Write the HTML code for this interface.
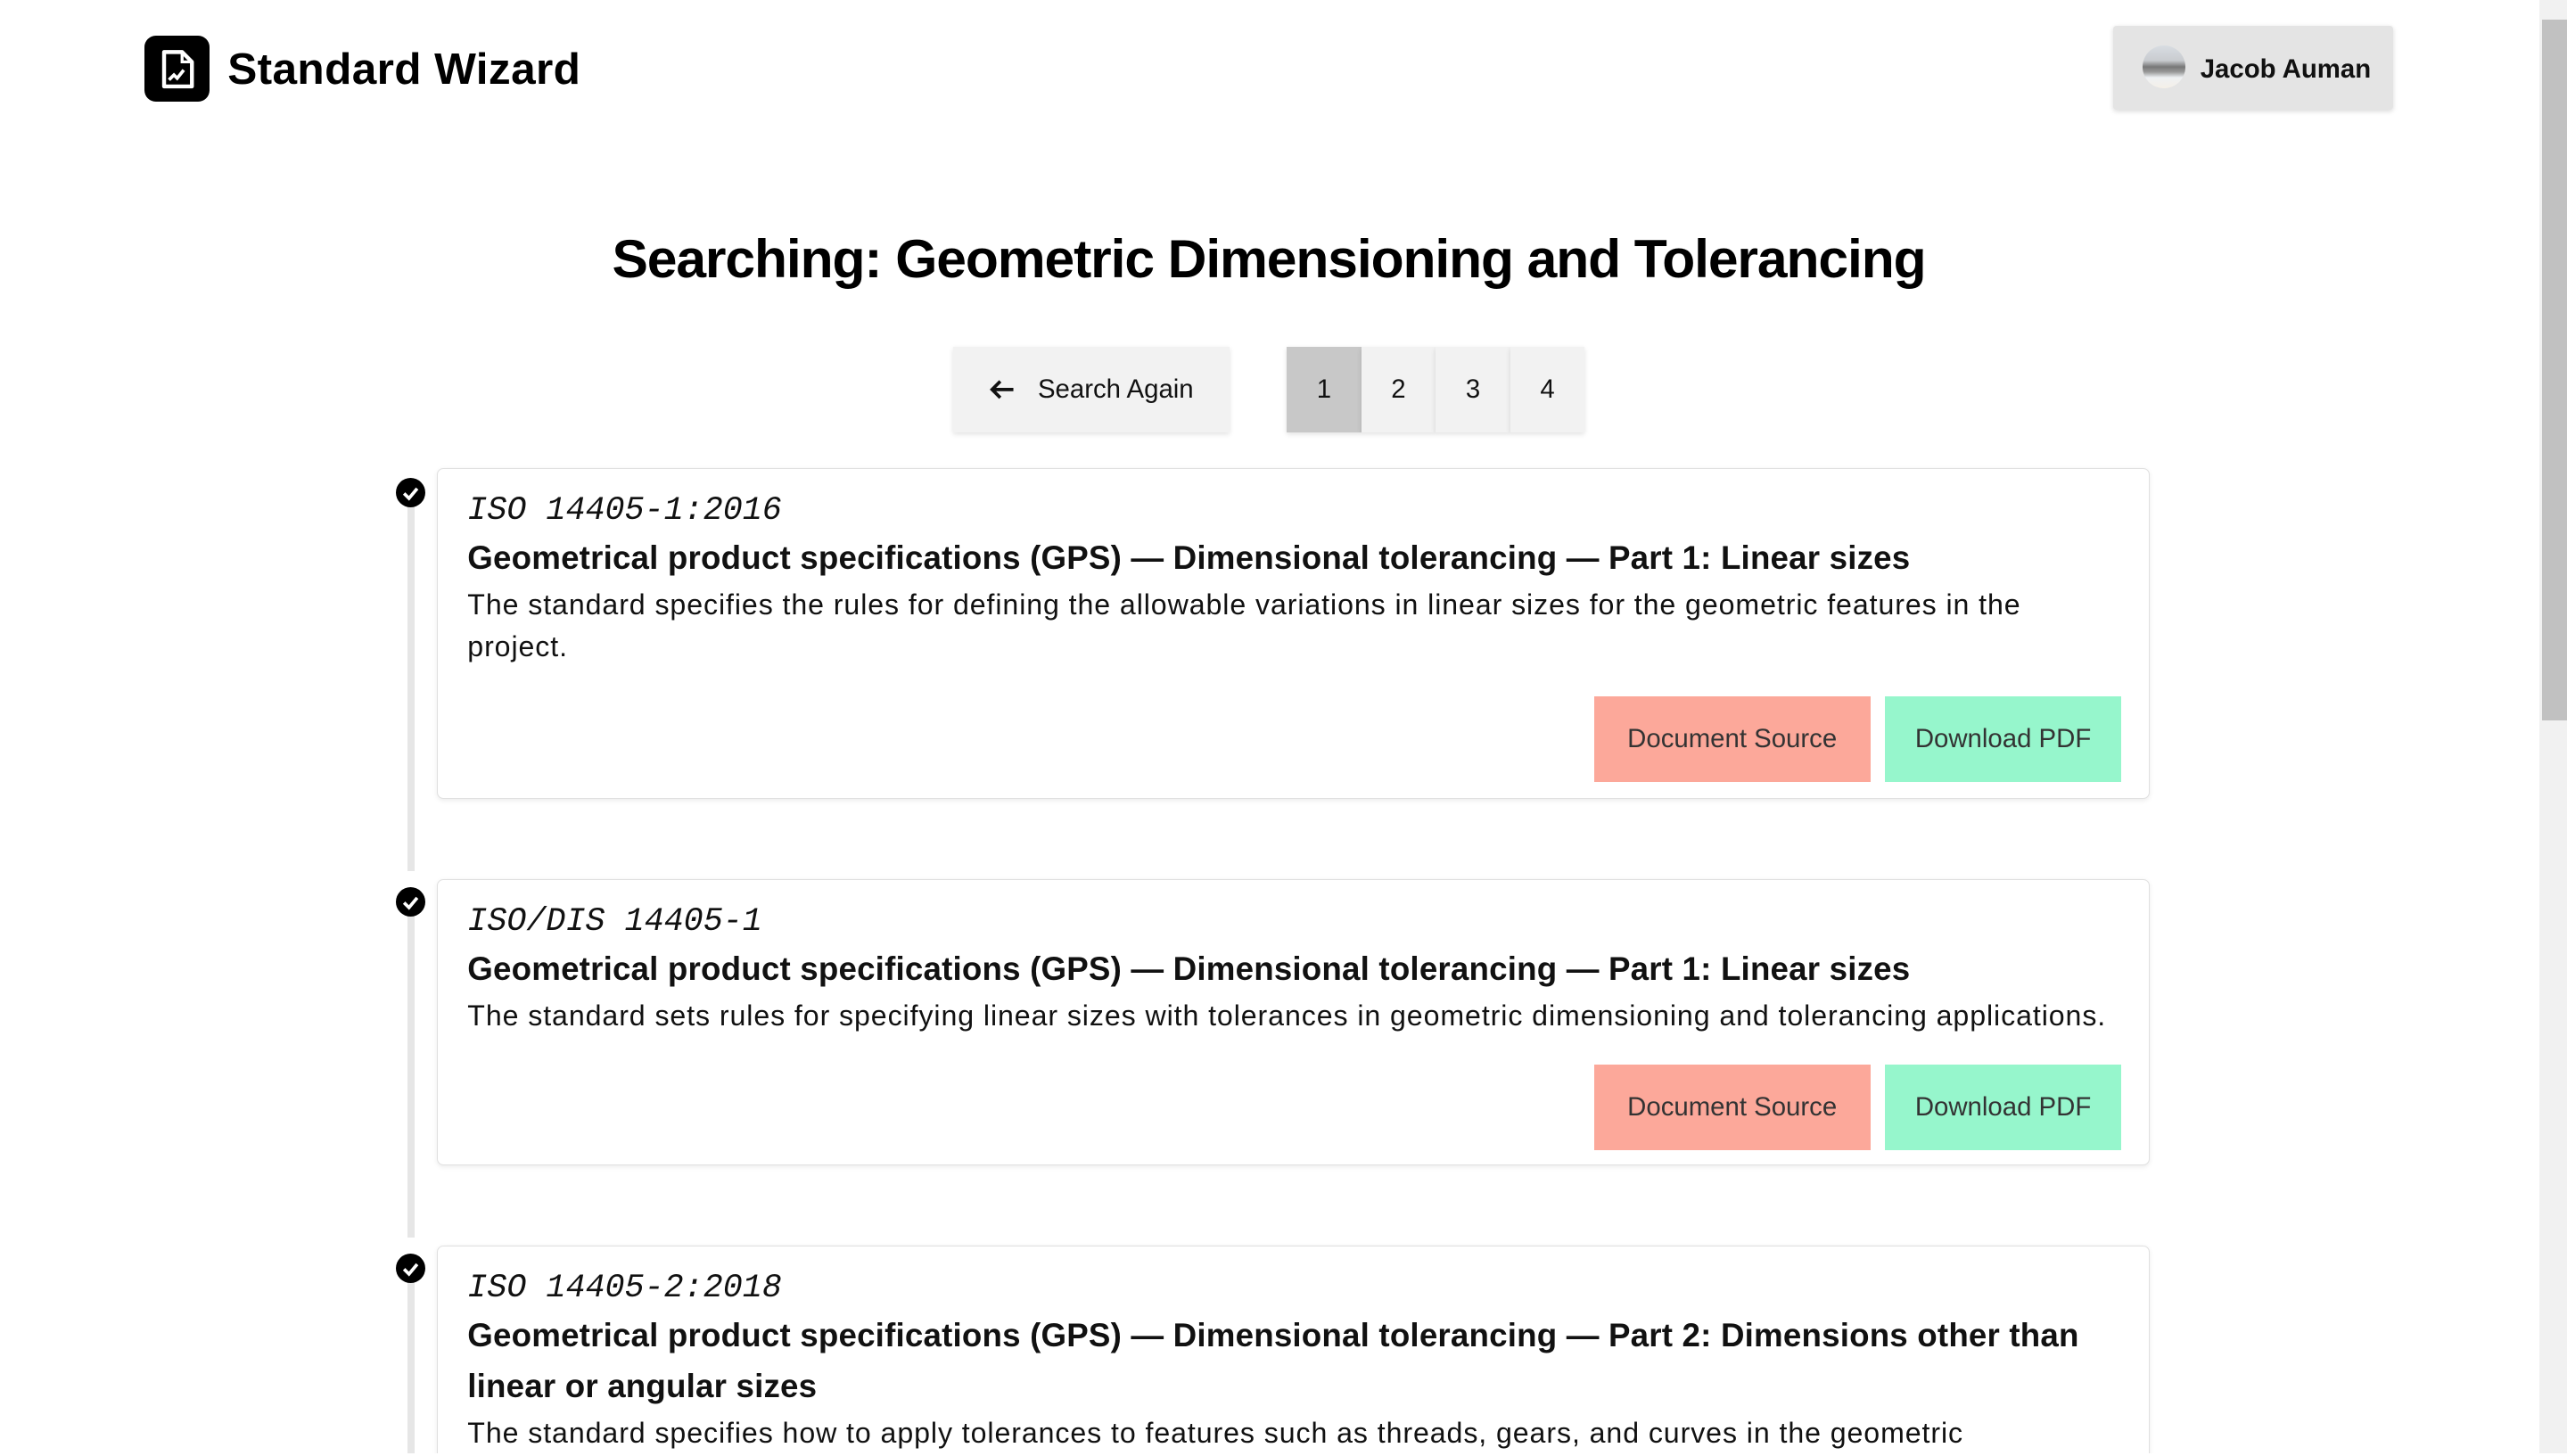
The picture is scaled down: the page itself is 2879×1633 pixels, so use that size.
<!DOCTYPE html>
<html><head><meta charset="utf-8"><style>
html,body{margin:0;padding:0;overflow:hidden;background:#fff}
body{width:1568px;height:888px;zoom:1.8361;position:relative;font-family:"Liberation Sans",sans-serif;color:#111}
#wrap{position:absolute;left:0;top:0;width:1568px;height:888px;overflow:hidden}
.abs{position:absolute}
.logo{left:88px;top:22px;width:40px;height:40px;background:#000;border-radius:7px}
.brand{left:139px;top:26px;font-size:27px;font-weight:bold;color:#000;letter-spacing:.2px}
.user{left:1291px;top:16px;width:171px;height:51px;background:#e4e4e4;box-shadow:0 1px 3px rgba(0,0,0,.15);border-radius:2px}
.av{left:18px;top:12px;width:26px;height:26px;border-radius:50%;background:linear-gradient(#d8dde2 0,#c9ccd0 35%,#777 50%,#999 62%,#eef1f4 75%,#f5f0e8 100%)}
.uname{left:53px;top:17px;font-size:16px;font-weight:bold;color:#111}
.sb{left:1551px;top:0;width:17px;height:889px;background:#f1f1f1}
.thumb{left:1553px;top:12px;width:15px;height:428px;background:#c1c1c1}
h1{position:absolute;left:0;width:1550px;text-align:center;top:139px;margin:0;font-size:33px;font-weight:bold;color:#000;letter-spacing:-.6px}
.btn{background:#f2f2f2;box-shadow:0 1px 3px rgba(0,0,0,.12);font-size:16px;color:#111;display:flex;align-items:center;justify-content:center}
.pg{top:212px;height:52px;width:45.5px;position:absolute}
.line{left:249px;width:4px;background:#e6e6e6}
.chk{left:242px;width:18px;height:18px;border-radius:50%;background:#000}
.card{left:267px;width:1045px;border:1px solid #e0e0e0;border-radius:4px;box-shadow:0 1px 3px rgba(0,0,0,.08);background:#fff}
.code{position:absolute;left:18px;font-family:"Liberation Mono",monospace;font-style:italic;font-size:20px;color:#111}
.tt{position:absolute;left:18px;right:18px;font-size:20px;font-weight:bold;line-height:31px;color:#111;letter-spacing:.1px}
.ds{position:absolute;left:18px;right:10px;font-size:17.5px;line-height:26px;color:#111;letter-spacing:.5px}
.b1,.b2{position:absolute;height:52px;font-size:16px;color:#333;display:flex;align-items:center;justify-content:center}
.b1{background:#fca89a;width:169px;right:170px}
.b2{background:#96f6cc;width:144px;right:17px}
</style></head><body><div id="wrap">
<div class="abs logo"><svg width="40" height="40" viewBox="0 0 40 40"><path d="M12 10h11l6 6v15h-17z" fill="none" stroke="#fff" stroke-width="2.4" stroke-linejoin="round"/><path d="M23 10v6h6" fill="none" stroke="#fff" stroke-width="1.8"/><path d="M15 27l3-3 2 2 4-5" fill="none" stroke="#fff" stroke-width="2"/></svg></div>
<div class="abs brand">Standard Wizard</div>
<div class="abs user"><div class="abs av"></div><div class="abs uname">Jacob Auman</div></div>
<div class="abs sb"></div><div class="abs thumb"></div>
<h1>Searching: Geometric Dimensioning and Tolerancing</h1>
<div class="abs btn" style="left:582px;top:212px;width:169px;height:52px"><svg width="16" height="14" style="margin-right:14px"><path d="M15 7H2M7 2L2 7l5 5" fill="none" stroke="#111" stroke-width="2"/></svg>Search Again</div>
<div class="btn pg" style="left:786px;background:#c8c8c8">1</div>
<div class="btn pg" style="left:831.5px">2</div>
<div class="btn pg" style="left:877px">3</div>
<div class="btn pg" style="left:922.5px">4</div>

<div class="abs line" style="top:300px;height:232px"></div>
<div class="abs line" style="top:551px;height:205px"></div>
<div class="abs line" style="top:775px;height:115px"></div>
<div class="abs chk" style="top:292px"><svg width="18" height="18"><path d="M5 9.5l3 3 5-6" fill="none" stroke="#fff" stroke-width="2"/></svg></div>
<div class="abs chk" style="top:542px"><svg width="18" height="18"><path d="M5 9.5l3 3 5-6" fill="none" stroke="#fff" stroke-width="2"/></svg></div>
<div class="abs chk" style="top:766px"><svg width="18" height="18"><path d="M5 9.5l3 3 5-6" fill="none" stroke="#fff" stroke-width="2"/></svg></div>

<div class="abs card" style="top:286px;height:201px">
<div class="code" style="top:14px">ISO 14405-1:2016</div>
<div class="tt" style="top:39px">Geometrical product specifications (GPS) — Dimensional tolerancing — Part 1: Linear sizes</div>
<div class="ds" style="top:70px">The standard specifies the rules for defining the allowable variations in linear sizes for the geometric features in the<br>project.</div>
<div class="b1" style="top:139px">Document Source</div><div class="b2" style="top:139px">Download PDF</div>
</div>
<div class="abs card" style="top:537px;height:174px">
<div class="code" style="top:14px">ISO/DIS 14405-1</div>
<div class="tt" style="top:39px">Geometrical product specifications (GPS) — Dimensional tolerancing — Part 1: Linear sizes</div>
<div class="ds" style="top:70px;white-space:nowrap">The standard sets rules for specifying linear sizes with tolerances in geometric dimensioning and tolerancing applications.</div>
<div class="b1" style="top:113px">Document Source</div><div class="b2" style="top:113px">Download PDF</div>
</div>
<div class="abs card" style="top:761px;height:200px">
<div class="code" style="top:14px">ISO 14405-2:2018</div>
<div class="tt" style="top:39px">Geometrical product specifications (GPS) — Dimensional tolerancing — Part 2: Dimensions other than linear or angular sizes</div>
<div class="ds" style="top:101px;white-space:nowrap">The standard specifies how to apply tolerances to features such as threads, gears, and curves in the geometric</div>
</div>
</div></body></html>
